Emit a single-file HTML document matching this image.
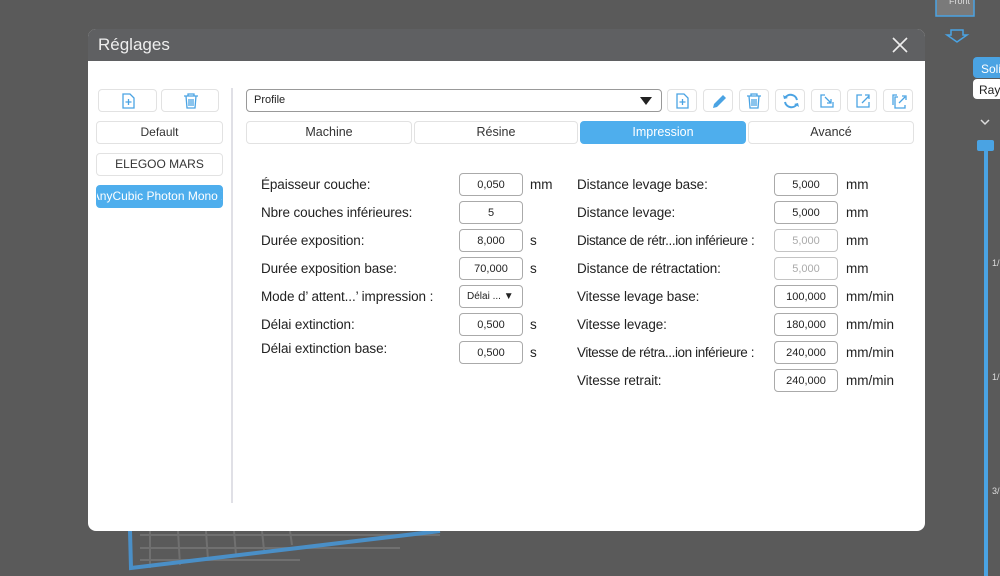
<!DOCTYPE html>
<html><head><meta charset="utf-8"><style>
*{box-sizing:border-box;margin:0;padding:0}
body{width:1000px;height:576px;background:#5a5a5a;position:relative;overflow:hidden;font-family:"Liberation Sans",sans-serif;color:#222}
.a{position:absolute}
.dlg{left:88px;top:29px;width:837px;height:502px;background:#fff;border-radius:8px;overflow:hidden}
.tb{left:0;top:0;width:837px;height:32px;background:#5f6062;color:#eee;font-size:17px;padding:6px 10px}
.btn{position:absolute;border:1px solid #e2e2e2;border-radius:4px;background:#fff;font-size:12px;text-align:center;line-height:21px;color:#333}
.ib{position:absolute;width:30px;height:23px;border:1px solid #e2e2e2;border-radius:4px;background:#fff}
.ib svg{position:absolute;left:6px;top:3px}
.lb{position:absolute;font-size:13.5px;color:#222;white-space:nowrap;letter-spacing:-0.1px}
.in{position:absolute;width:64px;height:23px;border:1px solid #aaa;border-radius:4px;font-size:11px;text-align:center;line-height:22px;background:#fff}
.u{position:absolute;font-size:13.5px}
.dis{color:#aaa;border-color:#c4c4c4}
</style></head><body>
<svg class="a" style="left:0;top:0" width="1000" height="576">
 <g stroke="#707070" stroke-width="2" fill="none">
  <line x1="140" y1="535" x2="440" y2="535"/><line x1="140" y1="548" x2="400" y2="548"/><line x1="140" y1="560" x2="300" y2="560"/>
  <line x1="150" y1="531" x2="150" y2="568"/><line x1="178" y1="531" x2="180" y2="565"/><line x1="206" y1="531" x2="208" y2="560"/><line x1="234" y1="531" x2="236" y2="555"/><line x1="262" y1="531" x2="264" y2="550"/><line x1="290" y1="531" x2="292" y2="545"/>
 </g>
 <polyline points="130,531 131,568 440,531" fill="none" stroke="#4a8fc7" stroke-width="4"/>
 <rect x="936" y="-10" width="38" height="26" fill="#7a7a7a" stroke="#4aa3e3" stroke-width="1.5"/>
 <text x="949" y="4" font-size="9" fill="#ddd" font-family="Liberation Sans">Front</text>
 <path d="M951 30h12v5h4l-10 7-10-7h4z" fill="none" stroke="#4aa3e3" stroke-width="1.5"/>
 <rect x="973" y="57" width="30" height="21" rx="4" fill="#4aa3e3"/>
 <text x="981" y="73" font-size="12" fill="#fff" font-family="Liberation Sans">Soli</text>
 <rect x="973" y="79" width="30" height="20" rx="4" fill="#fff"/>
 <text x="979" y="94" font-size="12" fill="#222" font-family="Liberation Sans">Rayo</text>
 <path d="M981 120l4 4 4-4" fill="none" stroke="#ddd" stroke-width="1.5"/>
 <rect x="984" y="145" width="4" height="431" fill="#4aa3e3"/>
 <rect x="977" y="140" width="17" height="11" rx="2" fill="#4aa3e3"/>
 <text x="992" y="266" font-size="9" fill="#ddd">1/</text>
 <text x="992" y="380" font-size="9" fill="#ddd">1/</text>
 <text x="992" y="494" font-size="9" fill="#ddd">3/</text>
</svg>
<div class="a dlg">
 <div class="a tb">Réglages</div>
 <svg class="a" style="left:803px;top:7px" width="18" height="18"><path d="M2 2L16 16M16 2L2 16" stroke="#eee" stroke-width="1.6"/></svg>
 <div class="ib" style="left:10px;top:60px;width:59px"><svg style="left:22px" width="14" height="16"><path d="M2 1h7l4 4v10H2z" fill="none" stroke="#4aa3e3" stroke-width="1.3"/><path d="M7.5 6v6M4.5 9h6" stroke="#4aa3e3" stroke-width="1.3"/></svg></div>
 <div class="ib" style="left:73px;top:60px;width:58px"><svg style="left:21px" width="16" height="16"><path d="M1 3h14M5 3V1h6v2M3 3l1 12h8l1-12M6 6v7M8 6v7M10 6v7" fill="none" stroke="#4aa3e3" stroke-width="1.3"/></svg></div>
 <div class="btn" style="left:8px;top:92px;width:127px;height:23px">Default</div>
 <div class="btn" style="left:8px;top:124px;width:127px;height:23px">ELEGOO MARS</div>
 <div class="btn" style="left:8px;top:156px;width:127px;height:23px;background:#4eaeed;border-color:#4eaeed;color:#fff;overflow:hidden"><div style="position:absolute;left:-10px;width:147px;text-align:center;white-space:nowrap">AnyCubic Photon Mono X</div></div>
 <div class="a" style="left:143px;top:59px;width:2px;height:415px;background:#e0e0e6"></div>
 <div class="a" style="left:158px;top:60px;width:416px;height:23px;border:1px solid #999;border-radius:4px;font-size:11px;line-height:21px;padding-left:7px">Profile</div>
 <svg class="a" style="left:552px;top:68px" width="12" height="8"><path d="M0 0h12L6 8z" fill="#222"/></svg>
 <div class="ib" style="left:579px;top:60px"><svg width="16" height="16"><path d="M3 1h7l4 4v10H3z" fill="none" stroke="#4aa3e3" stroke-width="1.3"/><path d="M8.5 6v6M5.5 9h6" stroke="#4aa3e3" stroke-width="1.3"/></svg></div>
 <div class="ib" style="left:615px;top:60px"><svg width="18" height="16"><path d="M3 15l1-4 9-9 3 3-9 9z" fill="#4aa3e3"/></svg></div>
 <div class="ib" style="left:651px;top:60px"><svg width="16" height="16"><path d="M1 3h14M5 3V1h6v2M3 3l1 12h8l1-12M6 6v7M8 6v7M10 6v7" fill="none" stroke="#4aa3e3" stroke-width="1.3"/></svg></div>
 <div class="ib" style="left:687px;top:60px"><svg width="18" height="16"><path d="M15 7A6.5 6.5 0 0 0 3 5M3 9a6.5 6.5 0 0 0 12 2" fill="none" stroke="#4aa3e3" stroke-width="2"/><path d="M1 2l1 4 4-1zM17 14l-1-4-4 1z" fill="#4aa3e3"/></svg></div>
 <div class="ib" style="left:723px;top:60px"><svg width="18" height="16"><path d="M7 2H3v12h12V9" fill="none" stroke="#4aa3e3" stroke-width="1.3"/><path d="M7 4l6 6M13 6v4H9" fill="none" stroke="#4aa3e3" stroke-width="1.3"/></svg></div>
 <div class="ib" style="left:759px;top:60px"><svg width="18" height="16"><path d="M8 2H3v12h12V9" fill="none" stroke="#4aa3e3" stroke-width="1.3"/><path d="M8 10l7-7M11 2h4v4" fill="none" stroke="#4aa3e3" stroke-width="1.3"/></svg></div>
 <div class="ib" style="left:795px;top:60px"><svg width="18" height="16"><path d="M8 4H5v11h10v-3M3 12V2h4" fill="none" stroke="#4aa3e3" stroke-width="1.3"/><path d="M9 10l6-6M12 3h4v4" fill="none" stroke="#4aa3e3" stroke-width="1.3"/></svg></div>
 <div class="btn" style="left:158px;top:92px;width:166px;height:23px;font-size:12.5px">Machine</div>
 <div class="btn" style="left:326px;top:92px;width:164px;height:23px;font-size:12.5px">Résine</div>
 <div class="btn" style="left:492px;top:92px;width:166px;height:23px;font-size:12.5px;background:#4eaeed;border-color:#4eaeed;color:#fff">Impression</div>
 <div class="btn" style="left:660px;top:92px;width:166px;height:23px;font-size:12.5px">Avancé</div>
 <div class="lb" style="left:173px;top:148px">Épaisseur couche:</div><div class="in" style="left:371px;top:144px">0,050</div><div class="u" style="left:442px;top:148px">mm</div>
 <div class="lb" style="left:173px;top:176px">Nbre couches inférieures:</div><div class="in" style="left:371px;top:172px">5</div>
 <div class="lb" style="left:173px;top:204px">Durée exposition:</div><div class="in" style="left:371px;top:200px">8,000</div><div class="u" style="left:442px;top:204px">s</div>
 <div class="lb" style="left:173px;top:232px">Durée exposition base:</div><div class="in" style="left:371px;top:228px">70,000</div><div class="u" style="left:442px;top:232px">s</div>
 <div class="lb" style="left:173px;top:260px">Mode d’ attent...’ impression :</div><div class="in" style="left:371px;top:256px;font-size:10px;text-align:left;padding-left:7px">Délai ... <span style="font-size:10px">▼</span></div>
 <div class="lb" style="left:173px;top:288px">Délai extinction:</div><div class="in" style="left:371px;top:284px">0,500</div><div class="u" style="left:442px;top:288px">s</div>
 <div class="lb" style="left:173px;top:312px">Délai extinction base:</div><div class="in" style="left:371px;top:312px">0,500</div><div class="u" style="left:442px;top:316px">s</div>
 <div class="lb" style="left:489px;top:148px">Distance levage base:</div><div class="in" style="left:686px;top:144px">5,000</div><div class="u" style="left:758px;top:148px">mm</div>
 <div class="lb" style="left:489px;top:176px">Distance levage:</div><div class="in" style="left:686px;top:172px">5,000</div><div class="u" style="left:758px;top:176px">mm</div>
 <div class="lb" style="left:489px;top:204px;letter-spacing:-0.4px">Distance de rétr...ion inférieure :</div><div class="in dis" style="left:686px;top:200px">5,000</div><div class="u" style="left:758px;top:204px">mm</div>
 <div class="lb" style="left:489px;top:232px">Distance de rétractation:</div><div class="in dis" style="left:686px;top:228px">5,000</div><div class="u" style="left:758px;top:232px">mm</div>
 <div class="lb" style="left:489px;top:260px">Vitesse levage base:</div><div class="in" style="left:686px;top:256px">100,000</div><div class="u" style="left:758px;top:260px">mm/min</div>
 <div class="lb" style="left:489px;top:288px">Vitesse levage:</div><div class="in" style="left:686px;top:284px">180,000</div><div class="u" style="left:758px;top:288px">mm/min</div>
 <div class="lb" style="left:489px;top:316px;letter-spacing:-0.4px">Vitesse de rétra...ion inférieure :</div><div class="in" style="left:686px;top:312px">240,000</div><div class="u" style="left:758px;top:316px">mm/min</div>
 <div class="lb" style="left:489px;top:344px">Vitesse retrait:</div><div class="in" style="left:686px;top:340px">240,000</div><div class="u" style="left:758px;top:344px">mm/min</div>
</div>
</body></html>
